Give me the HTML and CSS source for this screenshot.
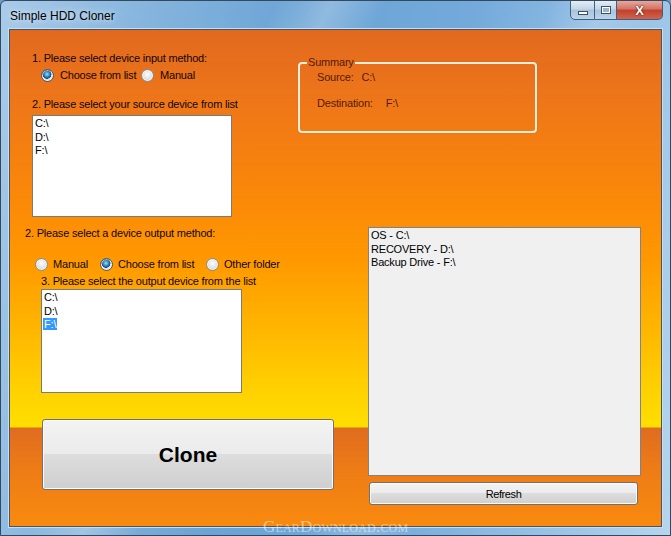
FILE: index.html
```html
<!DOCTYPE html>
<html lang="en">
  <head>
    <meta charset="UTF-8" />
    <title>Simple HDD Cloner</title>
    <link rel="stylesheet" href="styles.css">
  </head>
  <body>
    <div class="window">
      <header class="titlebar">
        <span class="title">Simple HDD Cloner</span>
        <div class="caption">
          <span class="cbtn min"><i></i></span>
          <span class="cbtn max"><i></i></span>
          <span class="cbtn close">X</span>
        </div>
      </header>

      <main class="client">
        <section class="top">
          <div class="source">
            <p class="label">1. Please select device input method:</p>
            <div class="radios in-method">
              <label class="radio checked opt-list"><i></i>Choose from list</label>
              <label class="radio"><i></i>Manual</label>
            </div>
            <p class="label gap-src">2. Please select your source device from list</p>
            <ul class="listbox src-list">
              <li>C:\</li>
              <li>D:\</li>
              <li>F:\</li>
            </ul>
          </div>

          <fieldset class="summary">
            <legend>Summary</legend>
            <div class="sum-row"><span>Source:</span><span class="val">C:\</span></div>
            <div class="sum-row dest"><span>Destination:</span><span class="val">F:\</span></div>
          </fieldset>
        </section>

        <section class="bottom">
          <div class="target">
            <p class="label">2. Please select a device output method:</p>
            <div class="radios out-method">
              <label class="radio opt-manual"><i></i>Manual</label>
              <label class="radio checked opt-choose"><i></i>Choose from list</label>
              <label class="radio"><i></i>Other folder</label>
            </div>
            <p class="label sub">3. Please select the output device from the list</p>
            <ul class="listbox dst-list">
              <li>C:\</li>
              <li>D:\</li>
              <li><span class="selected">F:\</span></li>
            </ul>
            <button class="btn clone">Clone</button>
          </div>

          <div class="drives">
            <ul class="listbox drive-list">
              <li>OS - C:\</li>
              <li>RECOVERY - D:\</li>
              <li>Backup Drive - F:\</li>
            </ul>
            <button class="btn refresh">Refresh</button>
          </div>
        </section>
      </main>

      <div class="watermark">GearDownload.com</div>
    </div>
  </body>
</html>
```

FILE: styles.css
```css
:root {
  --ui-font: "Liberation Sans", Arial, sans-serif;
  --list-line: 13.5px;
}

* {
  box-sizing: border-box;
}

html,
body {
  margin: 0;
  background: #6f9cc4;
}

/* aero glass frame */
.window {
  position: relative;
  width: 671px;
  height: 536px;
  display: flex;
  flex-direction: column;
  font-family: var(--ui-font);
  font-size: 11px;
  letter-spacing: -0.2px;
  border: 1px solid #34495e;
  border-radius: 6px 6px 0 0;
  background:
    linear-gradient(115deg, rgba(255, 255, 255, 0) 30%, rgba(255, 255, 255, 0.25) 36%, rgba(255, 255, 255, 0) 42%, rgba(255, 255, 255, 0) 60%, rgba(255, 255, 255, 0.2) 66%, rgba(255, 255, 255, 0) 72%),
    linear-gradient(100deg, #a9cbe9 0%, #87b6de 18%, #6aa3d5 40%, #73aadb 62%, #9ac3e6 85%, #b6d5ee 100%);
  overflow: hidden;
}

.titlebar {
  height: 28px;
  display: flex;
  align-items: flex-start;
  justify-content: space-between;
  padding-left: 9px;
}

.title {
  margin-top: 8px;
  font-size: 12px;
  letter-spacing: 0;
  color: #000;
  text-shadow: 0 0 6px rgba(255, 255, 255, 0.9);
}

.caption {
  display: flex;
  margin-right: 7px;
  margin-top: -1px;
}

.cbtn {
  height: 20px;
  display: flex;
  align-items: center;
  justify-content: center;
  border: 1px solid #41607f;
  border-left: none;
  background: linear-gradient(#e3edf6, #c3d6e8 45%, #a9c3dc 50%, #bcd4ea);
}

.cbtn.min {
  width: 25px;
  border-left: 1px solid #41607f;
  border-radius: 0 0 0 5px;
}

.cbtn.min i {
  width: 10px;
  height: 4px;
  margin-top: 5px;
  background: #fff;
  border: 1px solid #3a5068;
}

.cbtn.max {
  width: 22px;
}

.cbtn.max i {
  width: 10px;
  height: 8px;
  border: 1px solid #3a5068;
  background: #fff;
  box-shadow: inset 0 0 0 1px #fff, inset 0 0 0 3px #9db4cc;
}

.cbtn.close {
  width: 46px;
  border-radius: 0 0 5px 0;
  background: linear-gradient(#e6a89d, #d57262 45%, #c0412e 50%, #d3634c);
  color: #fff;
  font-weight: bold;
  font-size: 13px;
  text-shadow: 0 0 2px #5a1208, 0 0 1px #5a1208;
}

/* the form area */
.client {
  flex: 1;
  margin: 0 8px 8px 8px;
  border: 1px solid #45566a;
  box-shadow: 0 0 0 1px #c9def0;
  color: #120600;
  background: linear-gradient(
    to bottom,
    #e1691f 0px,
    #ee7619 70px,
    #fb8908 170px,
    #ff9800 230px,
    #ffb200 290px,
    #ffcd00 350px,
    #ffdf00 397px,
    #e06c20 398px,
    #ee7c16 440px,
    #f98a0e 497px
  );
}

.label {
  margin: 0;
  line-height: 13px;
  white-space: nowrap;
}

.top {
  display: flex;
  align-items: flex-start;
  height: 187px;
}

.source {
  flex: none;
  width: 222px;
  padding-left: 22px;
  padding-top: 22px;
}

.radios {
  display: flex;
  height: 13px;
  line-height: 13px;
}

.in-method {
  margin: 4px 0 0 9px;
}

.radio {
  display: flex;
  align-items: center;
  white-space: nowrap;
}

.radio i {
  width: 13px;
  height: 13px;
  margin-right: 6px;
  border-radius: 50%;
  border: 1px solid #8c8c8c;
  background: radial-gradient(circle at 50% 40%, #fdfdfd 0, #e6e6e6 45%, #c9c9c9 100%);
  box-shadow: inset 0 0 0 1px rgba(255, 255, 255, 0.6);
}

.radio.checked i {
  background:
    radial-gradient(circle at 45% 38%, #9be0ff 0, #2d86c0 30%, #0e4a78 48%, transparent 52%),
    radial-gradient(circle at 50% 40%, #fdfdfd 0, #e6e6e6 45%, #c9c9c9 100%);
  border-color: #4c5a66;
}

.opt-list {
  width: 100px;
}

.gap-src {
  margin-top: 16px;
}

.listbox {
  list-style: none;
  margin: 0;
  padding: 1px 2px;
  border: 1px solid #7a7a7a;
  background: #fff;
  line-height: var(--list-line);
  color: #000;
}

.src-list {
  margin-top: 4px;
  width: 200px;
  height: 102px;
}

.summary {
  flex: none;
  margin: 26px 0 0 66px;
  padding: 2px 0 0 0;
  width: 239px;
  height: 77px;
  border: 2px solid #fbeedd;
  border-radius: 4px;
  box-shadow: 0 0 1px rgba(120, 50, 0, 0.5);
  color: #561a05;
  line-height: 13px;
}

.summary legend {
  margin-left: 7px;
  padding: 0 1px;
  line-height: 13px;
}

.sum-row {
  margin-left: 17px;
}

.sum-row .val {
  margin-left: 8px;
}

.sum-row.dest {
  margin-top: 13px;
}

.sum-row.dest .val {
  margin-left: 13px;
}

.bottom {
  display: flex;
  align-items: flex-start;
  margin-top: 10px;
}

.target {
  flex: none;
  width: 358px;
  padding-left: 15px;
}

.out-method {
  margin: 18px 0 0 10px;
}

.out-method .radio i {
  margin-right: 5px;
}

.opt-manual {
  width: 65px;
}

.opt-choose {
  width: 106px;
}

.sub {
  margin: 4px 0 0 16px;
}

.dst-list {
  margin: 1px 0 0 16px;
  width: 201px;
  height: 104px;
}

.selected {
  background: #3399ff;
  color: #fff;
  padding: 0 1px;
  margin-left: -1px;
}

/* vista style push buttons */
.btn {
  display: block;
  padding: 0;
  font-family: var(--ui-font);
  color: #000;
  border: 1px solid #707070;
  border-radius: 3px;
  box-shadow: inset 0 0 0 1px #fbfbfb;
  background: linear-gradient(#f3f3f3 0%, #ebebeb 49%, #dddddd 50%, #cfcfcf 100%);
}

.clone {
  margin: 26px 0 0 17px;
  width: 292px;
  height: 71px;
  font-size: 21px;
  font-weight: bold;
  letter-spacing: 0;
}

.drive-list {
  width: 273px;
  height: 249px;
  background: #f0f0f0;
  border-color: #828282;
}

.refresh {
  margin: 6px 0 0 1px;
  width: 269px;
  height: 23px;
  font-size: 11px;
  letter-spacing: -0.4px;
}

/* watermark stamped over the bottom edge */
.watermark {
  position: absolute;
  left: 262px;
  bottom: 0;
  font-family: "Liberation Serif", serif;
  font-variant: small-caps;
  font-size: 17px;
  letter-spacing: 0.2px;
  line-height: 16px;
  color: rgba(255, 255, 255, 0.5);
}
```
